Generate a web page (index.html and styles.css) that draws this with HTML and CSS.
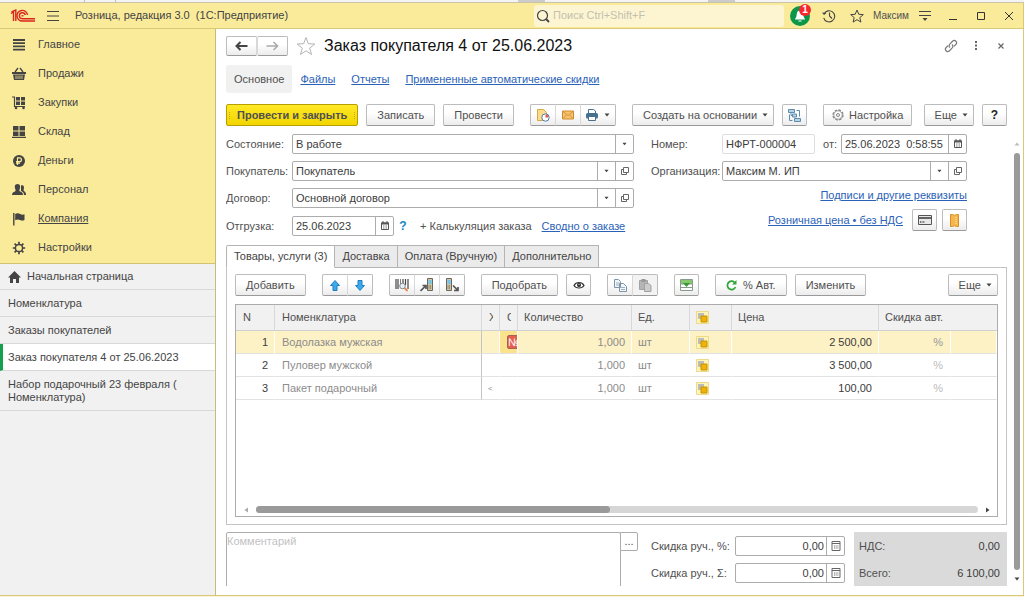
FILE: index.html
```html
<!DOCTYPE html>
<html lang="ru">
<head>
<meta charset="utf-8">
<title>Заказ покупателя 4 от 25.06.2023</title>
<link rel="stylesheet" href="styles.css">
</head>
<body>
<svg class="defs" aria-hidden="true">
  <symbol id="i-open" viewBox="0 0 10 10"><path d="M3.500 1.500h5v5h-5zM3 3.500H1.500v5h5V7" fill="none" stroke="#666"/></symbol>
  <symbol id="i-cal" viewBox="0 0 10 10"><path d="M1.500 2h7v6.500h-7z" fill="none" stroke="#555"/><path d="M1 1.500h8v2H1zM2.500 0h1v2h-1zM6.500 0h1v2h-1z" fill="#555"/><path d="M3 5h4M3 7h4" stroke="#777" stroke-dasharray="1 .5"/></symbol>
  <symbol id="i-calc" viewBox="0 0 10 10"><path d="M1 .5h8v9H1zM1 2.500h8" fill="none" stroke="#666"/><path d="M3 5h4.500M3 7h4.500" stroke="#666" stroke-dasharray="1 .7"/></symbol>
  <symbol id="i-caret" viewBox="0 0 6 4"><path d="M.5.5h5L3 3.500z" fill="#444"/></symbol>
  <symbol id="i-lock" viewBox="0 0 13 13"><path d="M.5.5h12v12H.5z" fill="#fff5b8" stroke="#ecd98a"/><path d="M2 2h6v6H2z" fill="#bcbcbc"/><path d="M5 5h6v6H5z" fill="#edb407" stroke="#c99200"/></symbol>
</svg>

<div class="backdrop"><span></span><span></span><span></span><span></span></div>

<header class="titlebar">
  <svg class="logo" viewBox="0 0 26 14" fill="none" stroke="#d9251d" stroke-width="1.400"><path d="M1 4.500 3.500 2.700V12M1.500 2.800 5.800 1V12"/><path d="M17.500 6A5.300 5.300 0 1 0 12.500 12H25M15.300 6A3 3 0 1 0 12.500 9.700H25"/><path d="M11.500 6.800h2" /></svg>
  <button class="flat" aria-label="Меню"><svg width="14" height="12" viewBox="0 0 14 12"><path d="M1 1.500h12M1 6h12M1 10.500h12" stroke="#444"/></svg></button>
  <span class="app-name">Розница, редакция 3.0&nbsp; (1С:Предприятие)</span>
  <label class="search">
    <svg width="14" height="14" viewBox="0 0 14 14" fill="none" stroke="#444"><circle cx="6.500" cy="6.500" r="5" stroke-width="1.200"/><path d="m10 10 3 3" stroke-width="1.800"/></svg>
    <input type="search" placeholder="Поиск Ctrl+Shift+F" aria-label="Поиск">
  </label>
  <button class="flat bell" aria-label="Уведомления"><svg width="20" height="20" viewBox="0 0 20 20"><circle cx="10" cy="10" r="10" fill="#0c9648"/><path d="M10 4.500c3 0 3.200 3 3.500 5.500.2 1.500 1.500 2.500 1.500 3.500H5c0-1 1.300-2 1.500-3.500.3-2.500.5-5.500 3.500-5.500zM8.500 14.500h3v1h-3z" fill="#fff"/></svg><span class="badge">1</span></button>
  <button class="flat" aria-label="История"><svg width="14" height="14" viewBox="0 0 14 14" fill="none" stroke="#444" stroke-width="1.100"><path d="M2 5a5.600 5.600 0 1 1-.3 3.800M7.500 3.500V7l2.500 2.500"/><path d="M0 3.500 2 6l2.500-2z" fill="#444" stroke="none"/></svg></button>
  <button class="flat" aria-label="Избранное"><svg width="14" height="14" viewBox="0 0 14 14" fill="none" stroke="#444"><path d="m7 1 1.800 4.300 4.500.3-3.500 3 1.100 4.500L7 10.700l-3.900 2.400 1.100-4.500-3.500-3 4.500-.3z"/></svg></button>
  <span class="user">Максим</span>
  <button class="flat" aria-label="Настройки окна"><svg width="14" height="12" viewBox="0 0 14 12"><path d="M1 1.500h12M1 5.500h12" stroke="#444"/><path d="M4.500 8h5L7 11z" fill="#444"/></svg></button>
  <button class="flat" aria-label="Свернуть"><svg width="10" height="10" viewBox="0 0 10 10"><path d="M1 8.500h8" stroke="#333"/></svg></button>
  <button class="flat" aria-label="Развернуть"><svg width="10" height="10" viewBox="0 0 10 10"><path d="M1.500 1.500h7v7h-7z" fill="none" stroke="#333"/></svg></button>
  <button class="flat" aria-label="Закрыть"><svg width="10" height="10" viewBox="0 0 10 10"><path d="m1 1 8 8M9 1 1 9" stroke="#333"/></svg></button>
</header>

<div class="body">
  <aside class="sidebar">
    <nav class="sections">
      <a href="#"><svg viewBox="0 0 14 14"><path d="M1 2h12M1 5.200h12M1 8.400h12M1 11.600h12" stroke="#444" stroke-width="1.800"/></svg>Главное</a>
      <a href="#"><svg viewBox="0 0 14 14"><path d="M0 5h14v2H0zM1 7.500h12l-1 5.500H2z" fill="#444"/><path d="m3 5 3-4M11 5 8 1" stroke="#444" stroke-width="1.300"/><path d="M4 8.500V12M6 8.500V12M8 8.500V12M10 8.500V12" stroke="#faeb9b" stroke-width=".8"/></svg>Продажи</a>
      <a href="#"><svg viewBox="0 0 14 14"><path d="M0 1h2.500v9.500H13" fill="none" stroke="#444" stroke-width="1.200"/><path d="M4 1h4v3.500H4zM9 1h4v3.500H9zM4 5.500h4V9H4zM9 5.500h4V9H9z" fill="#444"/><circle cx="4" cy="12" r="1.300" fill="#444"/><circle cx="11.500" cy="12" r="1.300" fill="#444"/></svg>Закупки</a>
      <a href="#"><svg viewBox="0 0 14 14"><path d="M1 1h5.500v4.500H1zM7.500 1H13v4.500H7.500zM1 6.500h5.500V11H1zM7.500 6.500H13V11H7.500zM0 11.700h14V13H0z" fill="#444"/></svg>Склад</a>
      <a href="#"><svg viewBox="0 0 14 14"><circle cx="7" cy="7" r="6" fill="#444"/><path d="M5.500 11V3.800h2a1.900 1.900 0 0 1 0 3.900H4M4 9.200h4" fill="none" stroke="#faeb9b" stroke-width="1.200"/></svg>Деньги</a>
      <a href="#"><svg viewBox="0 0 14 14"><path d="M5.500 1c3 0 3 3 2.200 5-.5 1.500-.4 2 .3 2.400 2 .8 3 1.300 3 3.600H0c0-2.300 1-2.800 3-3.600.7-.4.800-.9.300-2.400C2.500 4 2.500 1 5.500 1z" fill="#444"/><path d="M9 2.500c3-.8 3.300 1.500 2.800 3.500-.4 1.500 0 2 .7 2.500 1 .5 1.500 1.500 1.500 3.500h-2c0-2-1-3.200-3-4z" fill="#444"/></svg>Персонал</a>
      <a href="#" class="hover"><svg viewBox="0 0 14 14"><path d="M1.800 1v12.500" stroke="#444" stroke-width="1.400"/><path d="M3.200 2c2-1.200 3.500-.8 5 0s2.800.8 4.300.2V8c-1.500.8-3 .8-4.500 0s-3-.8-4.800.2z" fill="#444"/></svg>Компания</a>
      <a href="#"><svg viewBox="0 0 14 14"><circle cx="7" cy="7" r="3.600" fill="none" stroke="#444" stroke-width="1.500"/><path d="M7 .8v2.500M7 10.700v2.500M.8 7h2.500M10.700 7h2.500M2.600 2.600l1.800 1.800M9.600 9.600l1.800 1.800M11.400 2.600 9.600 4.400M4.400 9.600l-1.800 1.800" stroke="#444" stroke-width="1.700"/></svg>Настройки</a>
    </nav>
    <nav class="windows">
      <a href="#" class="home"><svg viewBox="0 0 13 12"><path d="M6.500 0 13 6.500h-2V12H8V8H5v4H2V6.500H0z" fill="#444"/></svg>Начальная страница</a>
      <a href="#">Номенклатура</a>
      <a href="#">Заказы покупателей</a>
      <a href="#" class="current">Заказ покупателя 4 от 25.06.2023</a>
      <a href="#">Набор подарочный 23 февраля ( Номенклатура)</a>
    </nav>
  </aside>

  <main class="form">
    <div class="head">
      <div class="group nav-buttons">
        <button class="btn" aria-label="Назад"><svg width="13" height="10" viewBox="0 0 13 10"><path d="M5.500 1 1.500 5l4 4M2 5h10.500" fill="none" stroke="#444" stroke-width="2"/></svg></button>
        <button class="btn" aria-label="Вперед"><svg width="13" height="10" viewBox="0 0 13 10"><path d="m7.500 1 4 4-4 4M11 5H.5" fill="none" stroke="#aaa" stroke-width="1.600"/></svg></button>
      </div>
      <button class="flat fav" aria-label="В избранное"><svg width="20" height="20" viewBox="0 0 20 20"><path d="m10 1.500 2.300 6.200 6.600.3-5.200 4.100 1.800 6.400-5.500-3.700-5.500 3.700 1.800-6.400L1.100 8l6.600-.3z" fill="none" stroke="#b4b4b4"/></svg></button>
      <h1>Заказ покупателя 4 от 25.06.2023</h1>
      <div class="head-tools">
        <button class="flat" aria-label="Ссылка"><svg width="14" height="14" viewBox="0 0 14 14" fill="none" stroke="#777" stroke-width="1.200"><path d="M6 8.500C4.500 7 5 5.800 6 4.800L8.500 2.300c2.500-2.200 5.500 1 3.300 3.200L10 7.300M8 5.500c1.500 1.500 1 2.700 0 3.700l-2.500 2.500c-2.500 2.200-5.500-1-3.300-3.200L4 6.700"/></svg></button>
        <button class="flat" aria-label="Дополнительно"><svg width="4" height="10" viewBox="0 0 4 10"><path d="M1 0h2v2H1zM1 3.500h2v2H1zM1 7h2v2H1z" fill="#666"/></svg></button>
        <button class="flat" aria-label="Закрыть"><svg width="8" height="8" viewBox="0 0 8 8"><path d="m1.500 1.500 5 5M6.500 1.500l-5 5" stroke="#666" stroke-width="1.200"/></svg></button>
      </div>
    </div>

    <nav class="links">
      <span class="on">Основное</span>
      <a href="#">Файлы</a>
      <a href="#">Отчеты</a>
      <a href="#">Примененные автоматические скидки</a>
    </nav>

    <div class="toolbar commands">
      <button class="btn primary">Провести и закрыть</button>
      <button class="btn">Записать</button>
      <button class="btn">Провести</button>
      <div class="group apart">
        <button class="btn icon" aria-label="Отчет"><svg width="14" height="14" viewBox="0 0 14 14"><path d="M1.500 1.500h6l3 3v8h-9z" fill="#fbdc88" stroke="#d5a94c"/><circle cx="9.500" cy="9.500" r="3.700" fill="#fff" stroke="#4f7da8"/><path d="M9.500 9.500V6.500a3 3 0 0 1 3 3z" fill="#e0574a"/></svg></button>
        <button class="btn icon" aria-label="Письмо"><svg width="14" height="10" viewBox="0 0 14 10"><path d="M1.500 1h11v8h-11z" fill="#f6c169" stroke="#d08a30"/><path d="m2 1.500 5 4 5-4M2 8.500 5.500 5M12 8.500 8.500 5" fill="none" stroke="#c98a3c" stroke-width=".8"/></svg></button>
        <button class="btn icon drop" aria-label="Печать"><svg width="14" height="12" viewBox="0 0 14 12"><path d="M3.500 4V.5h5L10.500 2v2" fill="#fff" stroke="#47708f"/><rect x="1" y="4" width="12" height="5.500" rx="1.500" fill="#47708f"/><path d="M3.500 7.500h7v4h-7z" fill="#fff" stroke="#47708f"/></svg><svg class="caret"><use href="#i-caret"/></svg></button>
      </div>
      <button class="btn more apart">Создать на основании<svg class="caret"><use href="#i-caret"/></svg></button>
      <button class="btn icon" aria-label="Связанные документы"><svg width="13" height="13" viewBox="0 0 13 13" fill="#b7d3e6" stroke="#5f8cad"><path d="M.5.5h6v3h-6zM4.500 5h4v3h-4zM6.500 9.500h6v3h-6z"/><path d="M8.500 1.500h3v6M1.500 5.500v6h3M3 3.500v3h1.500" fill="none"/></svg></button>
      <button class="btn apart tune"><svg width="12" height="12" viewBox="0 0 12 12"><circle cx="6" cy="6" r="5" fill="none" stroke="#888" stroke-width="1.300" stroke-dasharray="2.600 1.300"/><circle cx="6" cy="6" r="4.200" fill="none" stroke="#888" stroke-width=".8"/><circle cx="6" cy="6" r="1.500" fill="none" stroke="#888"/></svg>Настройка</button>
      <button class="btn more push">Еще<svg class="caret"><use href="#i-caret"/></svg></button>
      <button class="btn icon help">?</button>
    </div>

    <div class="scroll-area">
      <div class="content">
        <div class="fields">
          <div class="column">
            <div class="row"><label for="state">Состояние:</label><div class="box"><select id="state"><option>В работе</option></select><span class="cell"><svg class="caret"><use href="#i-caret"/></svg></span></div></div>
            <div class="row"><label for="buyer">Покупатель:</label><div class="box"><select id="buyer"><option>Покупатель</option></select><span class="cell"><svg class="caret"><use href="#i-caret"/></svg></span><button class="cell" aria-label="Открыть покупателя"><svg><use href="#i-open"/></svg></button></div></div>
            <div class="row"><label for="contract">Договор:</label><div class="box"><select id="contract"><option>Основной договор</option></select><span class="cell"><svg class="caret"><use href="#i-caret"/></svg></span><button class="cell" aria-label="Открыть договор"><svg><use href="#i-open"/></svg></button></div></div>
            <div class="row ship"><label for="ship">Отгрузка:</label><div class="box date"><input id="ship" type="text" value="25.06.2023"><button class="cell" aria-label="Выбрать дату отгрузки"><svg><use href="#i-cal"/></svg></button></div><button class="hint" aria-label="Подсказка">?</button><span class="calc">+ Калькуляция заказа</span><a href="#">Сводно о заказе</a></div>
          </div>
          <div class="column right">
            <div class="row"><label for="number">Номер:</label><div class="box quiet"><input id="number" type="text" value="НФРТ-000004" readonly></div><label for="date" class="from">от:</label><div class="box stamp"><input id="date" type="text" value="25.06.2023&nbsp; 0:58:55"><button class="cell" aria-label="Выбрать дату"><svg><use href="#i-cal"/></svg></button></div></div>
            <div class="row"><label for="org">Организация:</label><div class="box"><select id="org"><option>Максим М. ИП</option></select><span class="cell"><svg class="caret"><use href="#i-caret"/></svg></span><button class="cell" aria-label="Открыть организацию"><svg><use href="#i-open"/></svg></button></div></div>
            <div class="row end signatures"><a href="#">Подписи и другие реквизиты</a></div>
            <div class="row end prices"><a href="#">Розничная цена • без НДС</a>
              <button class="btn icon" aria-label="Карта"><svg width="14" height="10" viewBox="0 0 14 10"><path d="M.5.5h13v9H.5z" fill="#e8e8e8" stroke="#555"/><path d="M1 3h12" stroke="#444" stroke-width="1.600"/><path d="M2 7h5" stroke="#777" stroke-dasharray="1 .6" stroke-width="2"/></svg></button>
              <button class="btn icon" aria-label="Купон"><svg width="9" height="13" viewBox="0 0 9 13"><path d="M.5.5h2q2 1.500 4 0h2v12h-2q-2-1.500-4 0h-2z" fill="#f6b64a" stroke="#d6902b"/><path d="M6 3v7" stroke="#fff0c8" stroke-dasharray="1 1"/></svg></button></div>
          </div>
        </div>

        <div class="tabs" role="tablist">
          <button role="tab" aria-selected="true">Товары, услуги (3)</button>
          <button role="tab">Доставка</button>
          <button role="tab">Оплата (Вручную)</button>
          <button role="tab">Дополнительно</button>
        </div>
        <section class="panel">
          <div class="toolbar">
            <button class="btn">Добавить</button>
            <div class="group apart">
              <button class="btn icon" aria-label="Вверх"><svg width="10" height="11" viewBox="0 0 10 11"><path d="M5 .5 9.500 5.500H7v5H3v-5H.5z" fill="#3da9ec" stroke="#1e7fc0"/></svg></button>
              <button class="btn icon" aria-label="Вниз"><svg width="10" height="11" viewBox="0 0 10 11"><path d="M5 10.500.5 5.500H3v-5h4v5h2.500z" fill="#3da9ec" stroke="#1e7fc0"/></svg></button>
            </div>
            <div class="group apart">
              <button class="btn icon" aria-label="Поиск по штрихкоду"><svg width="14" height="14" viewBox="0 0 14 14"><path d="M1 1v10M3 1v10M8 1v6M10.500 1v6M13 1v10" stroke="#444" stroke-width="1.200"/><path d="M5.500 1v6" stroke="#444" stroke-width=".7"/><circle cx="7.500" cy="8" r="2.800" fill="#e2f0fa" stroke="#888"/><path d="m9.500 10 3 3" stroke="#e08a50" stroke-width="1.800"/></svg></button>
              <button class="btn icon" aria-label="Загрузить в терминал"><svg width="14" height="14" viewBox="0 0 14 14"><path d="M7.500.5h5v12h-5z" fill="#d5c69a" stroke="#666"/><path d="M8.500 2h3v4h-3z" fill="#6fc4ee"/><path d="M8.500 8h3M8.500 10h3" stroke="#555" stroke-dasharray="1 .6"/><path d="M.5 13 5 8.500M2.500 7.500H6V11" fill="none" stroke="#555" stroke-width="1.700"/></svg></button>
              <button class="btn icon" aria-label="Выгрузить из терминала"><svg width="14" height="14" viewBox="0 0 14 14"><path d="M1.500.5h5v12h-5z" fill="#d5c69a" stroke="#666"/><path d="M2.500 2h3v4h-3z" fill="#6fc4ee"/><path d="M2.500 8h3M2.500 10h3" stroke="#555" stroke-dasharray="1 .6"/><path d="m8 7.500 4.500 4.500M9 12.500h4V9" fill="none" stroke="#555" stroke-width="1.700"/></svg></button>
            </div>
            <button class="btn apart">Подобрать</button>
            <button class="btn icon" aria-label="Показать"><svg width="12" height="8" viewBox="0 0 12 8"><path d="M1 4.500C3 .5 9 .5 11 4.500 9 7.800 3 7.800 1 4.500z" fill="#fff" stroke="#333" stroke-width="1.200"/><circle cx="6" cy="4" r="2" fill="#222"/><circle cx="6" cy="3.600" r=".7" fill="#fff"/></svg></button>
            <div class="group apart">
              <button class="btn icon" aria-label="Копировать"><svg width="13" height="13" viewBox="0 0 13 13"><path d="M.5.5h4l2 2v6h-6zM5.500 4.500h4l3 3v5h-7z" fill="#f2f6fa" stroke="#7f94a8"/><path d="M2 4h3M2 6h3M7 8.500h4M7 10.500h4" stroke="#9fb2c2"/></svg></button>
              <button class="btn icon" aria-label="Вставить" disabled><svg width="13" height="13" viewBox="0 0 13 13"><path d="M.5 1.500h8v9h-8z" fill="#b5b5b5" stroke="#a2a2a2"/><path d="M2.500 0h4v3h-4z" fill="#999"/><path d="M5.500 4.500h4l2.500 2v6H5.500z" fill="#ccc" stroke="#a2a2a2"/></svg></button>
            </div>
            <button class="btn icon apart" aria-label="Заполнить"><svg width="13" height="12" viewBox="0 0 13 12"><path d="M.5.5h12v11H.5z" fill="#fff" stroke="#8a9a8a"/><path d="M1 1h11v4H1z" fill="#86c86c"/><path d="M1 8.500h11M1 5h11" stroke="#8a9a8a"/><path d="M3 4h7L6.500 8z" fill="#389839"/></svg></button>
            <button class="btn apart auto"><svg width="11" height="11" viewBox="0 0 11 11"><path d="M8.500 2.300A4.200 4.200 0 1 0 9.500 7" fill="none" stroke="#2fa53a" stroke-width="1.700"/><path d="M10.500 0v4.500H6z" fill="#2fa53a"/></svg>% Авт.</button>
            <button class="btn">Изменить</button>
            <button class="btn more push">Еще<svg class="caret"><use href="#i-caret"/></svg></button>
          </div>

          <div class="grid">
            <table>
              <colgroup><col class="c-n"><col><col class="c-s"><col class="c-s"><col class="c-q"><col class="c-u"><col class="c-l"><col class="c-p"><col class="c-d"><col class="c-e"></colgroup>
              <thead><tr><th>N</th><th>Номенклатура</th><th class="cut"><span>Х</span></th><th class="cut"><span>С</span></th><th>Количество</th><th>Ед.</th><th><svg class="lock"><use href="#i-lock"/></svg></th><th>Цена</th><th colspan="2">Скидка авт.</th></tr></thead>
              <tbody>
                <tr class="selected"><td class="num dark">1</td><td class="name">Водолазка мужская</td><td></td><td class="mark"><span>№</span></td><td class="num">1,000</td><td>шт</td><td><svg class="lock"><use href="#i-lock"/></svg></td><td class="num dark">2 500,00</td><td class="num pct">%</td><td></td></tr>
                <tr><td class="num dark">2</td><td class="name">Пуловер мужской</td><td></td><td></td><td class="num">1,000</td><td>шт</td><td><svg class="lock"><use href="#i-lock"/></svg></td><td class="num dark">3 500,00</td><td class="num pct">%</td><td></td></tr>
                <tr><td class="num dark">3</td><td class="name">Пакет подарочный</td><td class="tiny">&lt;</td><td></td><td class="num">1,000</td><td>шт</td><td><svg class="lock"><use href="#i-lock"/></svg></td><td class="num dark">100,00</td><td class="num pct">%</td><td></td></tr>
              </tbody>
            </table>
            <div class="hbar"><svg viewBox="0 0 4 6"><path d="M4 .5v5L.5 3z" fill="#aaa"/></svg><div class="track"><div class="thumb"></div></div><svg viewBox="0 0 4 6"><path d="M0 .5v5L3.500 3z" fill="#444"/></svg></div>
          </div>
        </section>

        <div class="footer">
          <div class="comment"><textarea placeholder="Комментарий" aria-label="Комментарий"></textarea><button aria-label="Открыть комментарий">...</button></div>
          <div class="discounts">
            <div class="row"><label for="dp">Скидка руч., %:</label><div class="box"><input id="dp" type="text" value="0,00"><button class="cell" aria-label="Калькулятор процента"><svg><use href="#i-calc"/></svg></button></div></div>
            <div class="row"><label for="ds">Скидка руч., Σ:</label><div class="box"><input id="ds" type="text" value="0,00"><button class="cell" aria-label="Калькулятор суммы"><svg><use href="#i-calc"/></svg></button></div></div>
          </div>
          <div class="totals">
            <div class="row"><label for="vat">НДС:</label><output id="vat">0,00</output></div>
            <div class="row"><label for="sum">Всего:</label><output id="sum">6 100,00</output></div>
          </div>
        </div>
      </div>
      <div class="vbar"><svg viewBox="0 0 6 4"><path d="M.5 3.500h5L3 .5z" fill="#bbb"/></svg><div class="thumb"></div><svg viewBox="0 0 6 4"><path d="M.5.5h5L3 3.500z" fill="#444"/></svg></div>
    </div>
  </main>
</div>
</body>
</html>
```
FILE: styles.css
```css
* { box-sizing: border-box; }
html, body { height: 100%; margin: 0; }
body {
  display: flex;
  flex-direction: column;
  overflow: hidden;
  background: #f8f3da;
  color: #505050;
  font: 11px/13px "Liberation Sans", Arial, sans-serif;
}
button, input, select, textarea { font: inherit; color: inherit; margin: 0; }
svg { display: block; flex: none; }
a { color: #2a62b8; text-underline-offset: 1px; }
.defs { position: absolute; width: 0; height: 0; }

/* Edge of the windows behind */
.backdrop { display: flex; height: 3px; background: #f4f4f4; border-bottom: 1px solid #c9c3a8; }
.backdrop span { width: 85px; border-right: 1px solid #bbb; }
.backdrop span:nth-child(2) { width: 31px; }
.backdrop span:nth-child(3) { width: 429px; border-right: 27px solid #ccc; }
.backdrop span:nth-child(4) { width: 190px; border-right: 27px solid #ccc; }

/* Title bar */
.titlebar { display: flex; align-items: center; height: 26px; background: #faeb9b; border-bottom: 1px solid #d8c878; border-right: 1px solid #d8c878; }
.flat { display: flex; align-items: center; justify-content: center; width: 28px; height: 24px; padding: 0; border: 0; background: none; position: relative; }
.logo { width: 26px; height: 14px; margin: 0 3px 0 10px; }
.app-name { margin-left: 8px; color: #444; white-space: nowrap; }
.search { display: flex; align-items: center; gap: 3px; width: 250px; height: 22px; margin-left: auto; padding-left: 2px; border-radius: 3px; background: #fdf5d2; }
.search input { flex: 1; min-width: 0; padding: 0; border: 0; background: none; outline: 0; }
.search input::placeholder { color: #c4c0ae; }
.bell { width: 31px; }
.badge { position: absolute; top: 0; right: 4px; width: 12px; height: 12px; border-radius: 6px; background: #f8262d; color: #fff; font: bold 10px/12px "Liberation Sans", Arial, sans-serif; text-align: center; }
.user { width: 40px; font-size: 10px; text-align: center; }

.body { display: flex; flex: 1; min-height: 0; margin-bottom: 1px; background: #fff; border-right: 1px solid #d8c878; border-bottom: 1px solid #d8c878; }

/* Sidebar */
.sidebar { flex: none; width: 216px; background: #f1f1f1; border-right: 1px solid #c9bb77; }
.sidebar a { display: flex; align-items: center; color: #444; text-decoration: none; }
.sections { padding: 1px 0; background: #faeb9b; border-bottom: 1px solid #d3c371; }
.sections a { gap: 12px; height: 29px; padding-left: 12px; }
.sections svg { width: 14px; height: 14px; }
.sidebar .hover { text-decoration: underline; }
.windows a { padding: 7px 36px 6px 8px; border-bottom: 1px solid #d8d8d8; }
.windows .home { gap: 6px; padding: 6px 8px; }
.windows .home svg { width: 13px; height: 12px; }
.windows .current { padding-left: 5px; background: #fff; border-left: 3px solid #15a04d; }

/* Form */
.form { display: flex; flex-direction: column; flex: 1; min-width: 0; padding: 6px 0 9px 10px; }
.head { display: flex; align-items: center; height: 22px; padding-right: 10px; }
.fav { margin-left: 4px; }
h1 { margin: 0 0 0 4px; color: #111; font-size: 16px; font-weight: normal; line-height: 20px; }
.head-tools { display: flex; align-items: center; margin-left: auto; }
.head-tools .flat { width: 25px; }
.links { display: flex; align-items: center; gap: 16px; margin-top: 8px; }
.links .on { margin-right: -8px; padding: 8px; border-radius: 3px; background: #f1f1f1; line-height: 12px; }

.btn {
  display: flex; align-items: center; justify-content: center; flex: none; gap: 5px;
  height: 22px; padding: 0 10px; white-space: nowrap;
  border: 1px solid #bcbcbc; border-bottom-color: #9a9a9a; border-radius: 2px;
  background: linear-gradient(#fff 40%, #ececec); color: #505050;
}
.btn.icon { width: 25px; padding: 0; }
.btn.icon.drop { width: 36px; }
.btn.more { padding-right: 5px; }
.btn.tune { padding: 0 8px; }
.btn.auto { gap: 6px; }
.btn:disabled { background: #f3f3f3; }
.btn.primary { position: relative; border-color: #b5a000; background: linear-gradient(#ffe926, #f2d500); font-weight: bold; }
.primary::before { content: ""; position: absolute; inset: 7px 2px 6px; border: dotted #a08c00; border-width: 0 1px; opacity: .6; }
.btn.help { color: #222; font-weight: bold; font-size: 12px; }
.caret { width: 6px; height: 4px; }
.group { display: flex; }
.group .btn.icon + .btn { margin-left: -1px; border-top-left-radius: 0; border-bottom-left-radius: 0; }
.group .btn:not(:last-child) { border-right-color: #d8d8d8; border-top-right-radius: 0; border-bottom-right-radius: 0; }
.group .btn.icon:not(.drop) { width: 26px; }
.group .btn + .btn { border-left-color: #d8d8d8; }
.nav-buttons .btn { width: 31px; height: 20px; padding: 0; }
.toolbar { display: flex; align-items: center; gap: 8px; }
.toolbar .apart { margin-left: 8px; }
.toolbar .push { margin-left: auto; }
.commands { margin: 11px 16px 7px 0; }

.scroll-area { display: flex; flex: 1; min-height: 0; }
.content { flex: 1; min-width: 0; overflow: hidden; }
.vbar { display: flex; flex-direction: column; align-items: center; gap: 7px; width: 16px; padding: 9px 0 5px 3px; }
.vbar svg { width: 6px; height: 4px; }
.vbar .thumb { flex: 1; width: 6px; border-radius: 3px; background: #9a9a9a; }

/* Field rows */
.fields { display: grid; grid-template-columns: 408fr 316fr; gap: 17px; padding: 1px 40px 0 0; }
.row { display: flex; align-items: center; height: 20px; }
.row label { flex: none; width: 66px; white-space: nowrap; }
.right .row label { width: 71px; }
.column { display: grid; gap: 7px; align-content: start; }
.box { display: flex; flex: 1; min-width: 0; height: 20px; border: 1px solid #acacac; border-radius: 2px; background: #fff; color: #3c3c3c; }
.box input, .box select { flex: 1; min-width: 0; width: 0; padding: 0 3px; border: 0; background: none; outline: 0; appearance: none; }
.cell { display: flex; align-items: center; justify-content: center; flex: none; width: 18px; padding: 0; border: 0; border-left: 1px solid #acacac; background: none; }
.cell svg:not(.caret) { width: 10px; height: 10px; }
.cell .caret { width: 5px; height: 4px; }
.box.quiet { flex: 0 1 93px; border-color: #dedede; }
.box.date { flex: 0 0 102px; }
.right .row .from { width: auto; margin: 0 4px 0 8px; }
.ship { margin-top: 1px; }
.hint { width: 8px; margin-left: 5px; padding: 0; border: 0; background: none; color: #1685c5; font-weight: bold; font-size: 12px; }
.calc { margin: 0 10px 0 13px; white-space: nowrap; }
.ship a { white-space: nowrap; }
.end { justify-content: flex-end; }
.prices { gap: 5px; }
.prices a { margin-right: 4px; }
.signatures { height: 15px; }

/* Tabs and panel */
.tabs { display: flex; position: relative; z-index: 1; margin-top: 9px; }
.tabs button { height: 23px; padding: 0 7px; border: 1px solid #b4b4b4; border-left-width: 0; background: #ebebeb; color: #444; white-space: nowrap; }
.tabs button:first-child { border-left-width: 1px; border-bottom-color: #fff; border-radius: 2px 0 0 0; background: #fff; }
.panel { margin-top: -1px; padding: 6px 8px 7px; border: 1px solid #c4c4c4; }
.grid { display: flex; flex-direction: column; height: 213px; margin-top: 8px; border: 1px solid #acacac; }
table { width: 100%; table-layout: fixed; border-collapse: separate; border-spacing: 0; }
.c-n { width: 39px; } .c-s { width: 18px; } .c-q { width: 114px; } .c-u { width: 58px; }
.c-l { width: 42px; } .c-p { width: 147px; } .c-d { width: 72px; } .c-e { width: 46px; }
th, td { padding: 0 6px; overflow: hidden; white-space: nowrap; text-align: left; }
th { height: 26px; background: #f1f1f1; border-right: 1px solid #d8d8d8; border-bottom: 1px solid #d0d0d0; font-weight: normal; }
th:last-child { border-right: 0; }
th:first-child, th:nth-child(2), td:nth-child(2) { padding-left: 7px; }
.cut span { display: block; width: 4px; overflow: hidden; }
th.cut { padding-left: 7px; }
td { height: 23px; border-right: 1px solid transparent; border-bottom: 1px solid #e2e2e2; color: #8c8c8c; }
td.name { border-right-color: #c4c4c4; }
.num { text-align: right; }
td.dark { color: #3c3c3c; }
td.pct { padding-right: 7px; color: #bbb; }
.selected td { background: #fdf1c6; border-right-color: #fff; }
.selected td.name { border-right-color: #c4c4c4; }
.selected td.pct { color: #999; }
.selected td.mark { padding: 0 0 0 7px; background: #fbe28c; }
.mark span { display: block; width: 14px; height: 14px; overflow: hidden; border: 1px solid #a96050; border-radius: 2px; background: #e2604d; color: #fff; line-height: 12px; }
td.tiny { font-size: 8px; }
.lock { width: 13px; height: 13px; }
.hbar { display: flex; align-items: center; gap: 8px; margin-top: auto; padding: 0 7px 3px 8px; }
.hbar svg { width: 4px; height: 6px; }
.hbar .track { flex: 1; height: 7px; border-radius: 4px; background: #d6d6d6; }
.hbar .thumb { width: 49%; height: 7px; border-radius: 4px; background: #9a9a9a; }

/* Comment, discounts, totals */
.footer { display: grid; grid-template-columns: minmax(0, 1fr) 194px 153px; column-gap: 9px; margin-top: 7px; }
.comment { display: flex; align-items: flex-start; margin-right: 4px; }
.comment textarea { flex: 1; min-width: 0; height: 64px; padding: 2px 0; border: 1px solid #acacac; border-radius: 2px; resize: none; outline: 0; }
.comment textarea::placeholder { color: #c2c2c2; }
.comment button { width: 18px; height: 19px; margin-left: -1px; padding: 0; border: 1px solid #acacac; border-radius: 0 2px 2px 0; background: #fff; }
.discounts, .totals { display: grid; gap: 7px; align-content: start; padding-top: 4px; }
.discounts label { width: 84px; }
.discounts input { padding: 0 2px; text-align: right; }
.totals { height: 64px; padding-right: 7px; padding-left: 5px; background: #dadada; }
.totals output { flex: 1; color: #3c3c3c; text-align: right; }
.totals label { width: 50px; }
```
